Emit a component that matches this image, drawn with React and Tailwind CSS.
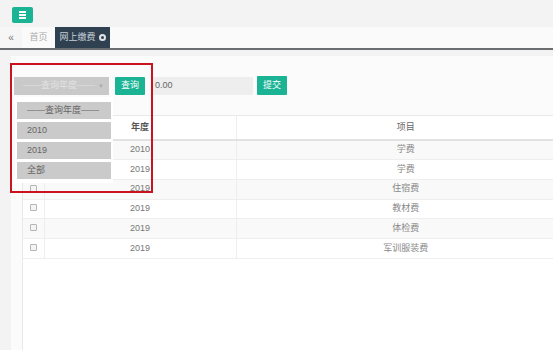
import React from 'react';

const rows = [
  { year: '2010', item: '学费' },
  { year: '2019', item: '学费' },
  { year: '2019', item: '住宿费' },
  { year: '2019', item: '教材费' },
  { year: '2019', item: '体检费' },
  { year: '2019', item: '军训服装费' },
];

const options = ['——查询年度——', '2010', '2019', '全部'];

const font = { fontFamily: '"Liberation Sans", "Noto Sans CJK SC", sans-serif' };

const Checkbox = () => (
  <span className="inline-block w-[7px] h-[7px] border border-[#b5b5b5] rounded-[1px] bg-[#f4f4f4]" />
);

const App = () => {
  return (
    <div style={font} className="relative w-[553px] h-[350px] overflow-hidden bg-[#f3f3f4] flex flex-col text-[9px] text-[#676a6c]">
      {/* top bar */}
      <div className="h-[27px] shrink-0 flex items-start pl-[12px] pt-[7px] bg-[#f3f3f4]">
        <button className="w-[21px] h-[16px] rounded-[2px] bg-[#1ab394] flex flex-col items-center justify-center gap-[1.5px]">
          <span className="block w-[7px] h-[1.5px] bg-white" />
          <span className="block w-[7px] h-[1.5px] bg-white" />
          <span className="block w-[7px] h-[1.5px] bg-white" />
        </button>
      </div>

      {/* tabs */}
      <div className="h-[23px] shrink-0 flex bg-[#fafafa] border-b-2 border-[#6a6e71]">
        <div className="w-[22px] flex items-center justify-center bg-[#f6f6f6] text-[#777] text-[10px] leading-none">«</div>
        <div className="w-[33px] flex items-center justify-center text-[#aaa]">首页</div>
        <div className="w-[55px] flex items-center justify-center gap-[3px] bg-[#2f4050] text-[#c8d0d8]">
          <span>网上缴费</span>
          <span className="w-[7px] h-[7px] rounded-full bg-[#dfe4e8] flex items-center justify-center">
            <span className="w-[3px] h-[3px] rounded-full bg-[#2f4050]" />
          </span>
        </div>
      </div>

      {/* body */}
      <div className="flex-1 flex min-h-0">
        <div className="w-[1px] bg-[#6b6b6b]" />
        <div className="flex-1 flex flex-col pl-[11px] pt-[6px]">
          <div className="flex-1 flex flex-col bg-[#fbfbfb]">
            {/* toolbar */}
            <div className="flex items-center mt-[21px] pl-[3px] h-[18px]">
              <div className="w-[95px] h-[18px] bg-[#c9c9c9] flex items-center justify-between pl-[9px] pr-[5px] text-[#e2e2e2]">
                <span>——查询年度——</span>
                <span className="text-[#aaa] text-[6px]">▼</span>
              </div>
              <button className="ml-[6px] w-[30px] h-[18px] bg-[#1ab394] text-white rounded-[1px]">查询</button>
              <div className="ml-[6px] w-[102px] h-[18px] bg-[#eeeeee] flex items-center pl-[4px] text-[#666]">0.00</div>
              <button className="ml-[4px] w-[30px] h-[19px] -mt-[1px] bg-[#1ab394] text-white rounded-[1px]">提交</button>
            </div>

            {/* table */}
            <div className="flex-1 mt-[20px] ml-[11px] bg-white border-l border-t border-[#e7eaec]">
              <table className="table-fixed border-collapse w-[552px]">
                <colgroup>
                  <col className="w-[21px]" />
                  <col className="w-[192px]" />
                  <col className="w-[339px]" />
                </colgroup>
                <thead>
                  <tr className="h-[24px] border-b-2 border-[#e2e2e2]">
                    <th className="border-r border-[#eeeeee] text-center"><Checkbox /></th>
                    <th className="border-r border-[#eeeeee] text-center font-semibold text-[#555]">年度</th>
                    <th className="text-center font-normal text-[#666]">项目</th>
                  </tr>
                </thead>
                <tbody>
                  {rows.map((r, i) => (
                    <tr key={i} className={`h-[19.7px] border-b border-[#eeeeee] ${i % 2 === 0 ? 'bg-[#f9f9f9]' : 'bg-white'}`}>
                      <td className="border-r border-[#eeeeee] text-center leading-none"><Checkbox /></td>
                      <td className="border-r border-[#eeeeee] text-center text-[#777]">{r.year}</td>
                      <td className="text-center text-[#888]">{r.item}</td>
                    </tr>
                  ))}
                </tbody>
              </table>
            </div>
          </div>
        </div>
      </div>

      {/* open dropdown */}
      <div className="absolute left-[15px] top-[97px] w-[98px] bg-white flex flex-col gap-[3px] px-[2px] pt-[5px] pb-[4px]">
        {options.map((o) => (
          <div key={o} className="h-[17px] bg-[#cacaca] flex items-center pl-[10px] text-[#666]">{o}</div>
        ))}
      </div>

      {/* annotation box */}
      <div className="absolute left-[10px] top-[63px] w-[143px] h-[130px] border-2 border-[#c8141e]" />
    </div>
  );
};

export default App;
